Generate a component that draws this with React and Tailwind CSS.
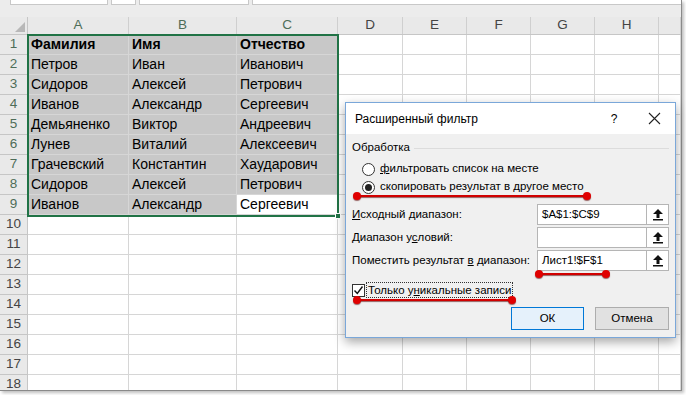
import React from 'react'

const cols = [
  { name: 'A', w: 'w-[101px]' },
  { name: 'B', w: 'w-[108px]' },
  { name: 'C', w: 'w-[101px]' },
  { name: 'D', w: 'w-[65px]' },
  { name: 'E', w: 'w-[64px]' },
  { name: 'F', w: 'w-[64px]' },
  { name: 'G', w: 'w-[64px]' },
  { name: 'H', w: 'w-[64px]' },
  { name: '', w: 'flex-1' },
]

const data = [
  ['Фамилия', 'Имя', 'Отчество'],
  ['Петров', 'Иван', 'Иванович'],
  ['Сидоров', 'Алексей', 'Петрович'],
  ['Иванов', 'Александр', 'Сергеевич'],
  ['Демьяненко', 'Виктор', 'Андреевич'],
  ['Лунев', 'Виталий', 'Алексеевич'],
  ['Грачевский', 'Константин', 'Хаударович'],
  ['Сидоров', 'Алексей', 'Петрович'],
  ['Иванов', 'Александр', 'Сергеевич'],
]

const font = { fontFamily: '"Liberation Sans", Arial, sans-serif' }

function UploadIcon() {
  return (
    <svg width="12" height="13" viewBox="0 0 12 13">
      <polygon points="6,1 11,6 7.5,6 7.5,10 4.5,10 4.5,6 1,6" fill="#111" />
      <rect x="1" y="11" width="10" height="1.5" fill="#111" />
    </svg>
  )
}

function RedMark({ x1, x2, y }) {
  return (
    <div
      className="absolute h-[2px] bg-[#d10000] shadow-[0_1px_1px_rgba(90,0,0,0.6)]"
      style={{ left: x1, top: y - 1, width: x2 - x1 }}
    >
      <span className="absolute -left-[4px] -top-[3px] w-[8px] h-[8px] rounded-full bg-[#e00000] shadow-[0_1px_1px_rgba(90,0,0,0.6)]" />
      <span className="absolute -right-[4px] -top-[3px] w-[8px] h-[8px] rounded-full bg-[#e00000] shadow-[0_1px_1px_rgba(90,0,0,0.6)]" />
    </div>
  )
}

function RangeRow({ label, value }) {
  return (
    <div className="flex items-center h-[21px]">
      <div className="flex-1 text-[11.5px] text-black whitespace-nowrap">{label}</div>
      <div className="w-[110px] h-[21px] bg-white border border-[#b5b5b5] flex items-center px-[4px] text-[11.5px] text-black">
        {value}
      </div>
      <div className="w-[22px] h-[21px] bg-white border border-l-0 border-[#b5b5b5] flex items-center justify-center">
        <UploadIcon />
      </div>
    </div>
  )
}

function Dialog() {
  return (
    <div
      className="absolute left-[345px] top-[102px] w-[331px] h-[236px] border border-[#7aa7d9] bg-[#f0f0f0] shadow-[0_4px_10px_rgba(0,0,0,0.35)] flex flex-col"
      style={{ fontFamily: '"Liberation Sans", "Noto Sans", sans-serif' }}
    >
      <div className="h-[31px] shrink-0 bg-white flex items-center pl-[9px] pr-[14px] text-[12px] text-black">
        <div className="flex-1">Расширенный фильтр</div>
        <div className="w-[20px] text-center mr-[24px]">?</div>
        <svg width="13" height="13" viewBox="0 0 13 13">
          <path d="M1 1 L12 12 M12 1 L1 12" stroke="#222" strokeWidth="1.1" />
        </svg>
      </div>
      <div className="flex-1 px-[6px] pt-[5px] flex flex-col whitespace-nowrap">
        <div className="flex items-center h-[18px] text-[11.5px] text-black">
          <span>Обработка</span>
          <div className="flex-1 ml-[4px] border-t border-[#dcdcdc]" />
        </div>
        <div className="ml-[10px] mt-[3px] flex items-center h-[18px] text-[11.5px] text-black">
          <span className="w-[13px] h-[13px] rounded-full border border-[#333] bg-white mr-[5px]" />
          <span><span className="underline">ф</span>ильтровать список на месте</span>
        </div>
        <div className="ml-[10px] flex items-center h-[18px] text-[11.5px] text-black">
          <span className="w-[13px] h-[13px] rounded-full border border-[#333] bg-white mr-[5px] flex items-center justify-center">
            <span className="w-[7px] h-[7px] rounded-full bg-[#222]" />
          </span>
          <span>скопировать результат в <span className="underline">д</span>ругое место</span>
        </div>
        <div className="mt-[8px] flex flex-col gap-[2px]">
          <RangeRow label={<><span className="underline">И</span>сходный диапазон:</>} value="$A$1:$C$9" />
          <RangeRow label={<>Диапазон у<span className="underline">с</span>ловий:</>} value="" />
          <RangeRow label={<>Поместить результат <span className="underline">в</span> диапазон:</>} value="Лист1!$F$1" />
        </div>
        <div className="mt-[11px] flex items-center h-[16px] text-[11.5px] text-black">
          <span className="w-[13px] h-[13px] border border-[#333] bg-white flex items-center justify-center">
            <svg width="11" height="11" viewBox="0 0 11 11">
              <path d="M1.5 5.5 L4.3 8.5 L9.5 1.5" stroke="#111" strokeWidth="1.4" fill="none" />
            </svg>
          </span>
          <span className="ml-[1px] px-[1px] border border-dotted border-[#333] leading-[14px]">
            Только у<span className="underline">н</span>икальные записи
          </span>
        </div>
        <div className="mt-[9px] flex justify-end gap-[11px]">
          <div className="w-[73px] h-[23px] bg-[#e5f1fb] border border-[#0078d7] flex items-center justify-center text-[11.5px] text-black">
            ОК
          </div>
          <div className="w-[74px] h-[23px] bg-[#e1e1e1] border border-[#adadad] flex items-center justify-center text-[11.5px] text-black">
            Отмена
          </div>
        </div>
      </div>
    </div>
  )
}

export default function App() {
  const rows = Array.from({ length: 18 }, (_, i) => i + 1)
  return (
    <div className="w-[686px] h-[395px] bg-white relative overflow-hidden" style={font}>
      <div className="w-[682px] h-[391px] border-r border-b border-[#8a8a8a] shadow-[2px_2px_3px_rgba(0,0,0,0.25)] overflow-hidden flex flex-col bg-white">
        <div className="h-[17px] shrink-0 bg-[#ececec] flex items-start gap-[3px] pl-[10px]">
          <div className="w-[98px] h-[5px] bg-white border border-t-0 border-[#c8c8c8]" />
          <div className="w-[25px] h-[5px] bg-white border border-t-0 border-[#c8c8c8]" />
          <div className="w-[110px] h-[5px] bg-white border border-t-0 border-[#c8c8c8]" />
          <div className="flex-1 h-[5px] bg-white border border-t-0 border-r-0 border-[#c8c8c8]" />
        </div>
        <div className="h-[18px] shrink-0 flex bg-[#e9e9e9] border-b border-[#c6c6c6]">
          <div className="w-[28px] border-r border-[#c6c6c6] flex items-end justify-end p-[2px]">
            <svg width="10" height="10" viewBox="0 0 10 10">
              <polygon points="10,0 10,10 0,10" fill="#b8b8b8" />
            </svg>
          </div>
          {cols.map((c, i) => (
            <div
              key={i}
              className={`${c.w} border-r border-[#cfcfcf] flex items-center justify-center text-[13.5px] ${i < 3 ? 'text-[#4e6d58]' : 'text-[#444]'}`}
            >
              {c.name}
            </div>
          ))}
        </div>
        {rows.map((r) => (
          <div key={r} className="h-[20px] shrink-0 flex">
            <div
              className={`w-[28px] bg-[#e9e9e9] border-r border-b border-[#c6c6c6] flex items-center justify-center text-[13.5px] ${r <= 9 ? 'text-[#4e6d58]' : 'text-[#444]'}`}
            >
              {r}
            </div>
            {cols.map((c, i) => {
              const sel = r <= 9 && i < 3 && !(r === 9 && i === 2)
              const txt = r <= 9 && i < 3 ? data[r - 1][i] : ''
              return (
                <div
                  key={i}
                  className={`${c.w} border-r border-b border-[#d6d6d6] flex items-center pl-[3px] text-[14px] text-black whitespace-nowrap overflow-hidden ${sel ? 'bg-[#c8c8c8]' : 'bg-white'} ${r === 1 ? 'font-bold' : ''}`}
                >
                  {txt}
                </div>
              )
            })}
          </div>
        ))}
      </div>

      <div className="absolute left-[27px] top-[34px] w-[312px] h-[183px] border-2 border-[#217346]" />
      <div className="absolute left-[335px] top-[213px] w-[6px] h-[6px] bg-[#217346] border border-white" />

      <Dialog />

      <RedMark x1={357} x2={587} y={196} />
      <RedMark x1={539} x2={606} y={274} />
      <RedMark x1={357} x2={512} y={300} />
    </div>
  )
}
